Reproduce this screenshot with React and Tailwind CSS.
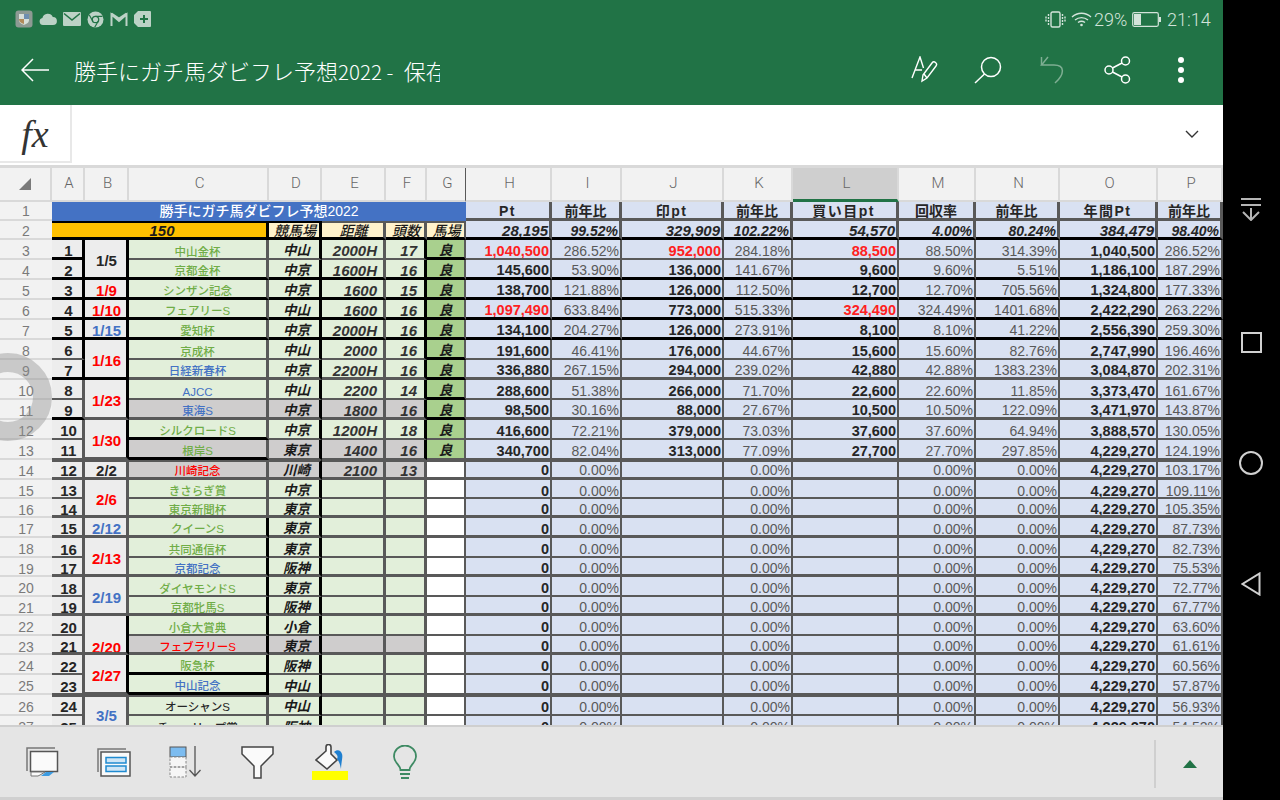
import React from 'react'

const COLS = ['A', 'B', 'C', 'D', 'E', 'F', 'G', 'H', 'I', 'J', 'K', 'L', 'M', 'N', 'O', 'P']

const LINE = {
  k: 'border-b-[3px] border-b-black',
  g: 'border-b-2 border-b-[#595959]',
  G: 'border-b-[3px] border-b-[#595959]',
}
const TINT = { k: 'text-[#262626]', r: 'text-[#ff0000]', b: 'text-[#4472c4]', g: 'text-[#70ad47]' }

// la / lc / lg / lh = bottom line of the A, C-F, G and H-P blocks
const rows = [
  { n: 3, a: '1', date: '1/5', dc: 'k', span: 2, race: '中山金杯', rc: 'g', d: '中山', e: '2000H', f: '17', good: 1, la: 'k', lc: 'g', lg: 'k', lh: 'g', vals: ['1,040,500', '286.52%', '952,000', '284.18%', '88,500', '88.50%', '314.39%', '1,040,500', '286.52%'], red: [0, 2, 4] },
  { n: 4, a: '2', race: '京都金杯', rc: 'g', d: '中京', e: '1600H', f: '16', good: 1, la: 'k', lc: 'k', lg: 'k', lh: 'k', vals: ['145,600', '53.90%', '136,000', '141.67%', '9,600', '9.60%', '5.51%', '1,186,100', '187.29%'] },
  { n: 5, a: '3', date: '1/9', dc: 'r', span: 1, race: 'シンザン記念', rc: 'g', d: '中京', e: '1600', f: '15', good: 1, la: 'k', lc: 'k', lg: 'k', lh: 'k', vals: ['138,700', '121.88%', '126,000', '112.50%', '12,700', '12.70%', '705.56%', '1,324,800', '177.33%'] },
  { n: 6, a: '4', date: '1/10', dc: 'r', span: 1, race: 'フェアリーS', rc: 'g', d: '中山', e: '1600', f: '16', good: 1, la: 'k', lc: 'k', lg: 'k', lh: 'k', vals: ['1,097,490', '633.84%', '773,000', '515.33%', '324,490', '324.49%', '1401.68%', '2,422,290', '263.22%'], red: [0, 4] },
  { n: 7, a: '5', date: '1/15', dc: 'b', span: 1, race: '愛知杯', rc: 'g', d: '中京', e: '2000H', f: '16', good: 1, la: 'k', lc: 'k', lg: 'k', lh: 'k', vals: ['134,100', '204.27%', '126,000', '273.91%', '8,100', '8.10%', '41.22%', '2,556,390', '259.30%'] },
  { n: 8, a: '6', date: '1/16', dc: 'r', span: 2, race: '京成杯', rc: 'g', d: '中山', e: '2000', f: '16', good: 1, la: 'g', lc: 'g', lg: 'k', lh: 'g', vals: ['191,600', '46.41%', '176,000', '44.67%', '15,600', '15.60%', '82.76%', '2,747,990', '196.46%'] },
  { n: 9, a: '7', race: '日経新春杯', rc: 'b', d: '中京', e: '2200H', f: '16', good: 1, la: 'k', lc: 'G', lg: 'k', lh: 'G', vals: ['336,880', '267.15%', '294,000', '239.02%', '42,880', '42.88%', '1383.23%', '3,084,870', '202.31%'] },
  { n: 10, a: '8', date: '1/23', dc: 'r', span: 2, race: 'AJCC', rc: 'b', d: '中山', e: '2200', f: '14', good: 1, la: 'g', lc: 'g', lg: 'k', lh: 'g', vals: ['288,600', '51.38%', '266,000', '71.70%', '22,600', '22.60%', '11.85%', '3,373,470', '161.67%'] },
  { n: 11, a: '9', race: '東海S', rc: 'b', d: '中京', e: '1800', f: '16', gray: 1, good: 1, la: 'k', lc: 'G', lg: 'k', lh: 'G', vals: ['98,500', '30.16%', '88,000', '27.67%', '10,500', '10.50%', '122.09%', '3,471,970', '143.87%'] },
  { n: 12, a: '10', date: '1/30', dc: 'r', span: 2, race: 'シルクロードS', rc: 'g', d: '中京', e: '1200H', f: '18', good: 1, la: 'g', lc: 'k', ld: 'g', lg: 'g', lh: 'g', vals: ['416,600', '72.21%', '379,000', '73.03%', '37,600', '37.60%', '64.94%', '3,888,570', '130.05%'] },
  { n: 13, a: '11', race: '根岸S', rc: 'g', d: '東京', e: '1400', f: '16', gray: 1, good: 1, la: 'g', lc: 'k', ld: 'g', lg: 'g', lh: 'g', vals: ['340,700', '82.04%', '313,000', '77.09%', '27,700', '27.70%', '297.85%', '4,229,270', '124.19%'] },
  { n: 14, a: '12', date: '2/2', dc: 'k', span: 1, race: '川崎記念', rc: 'r', d: '川崎', e: '2100', f: '13', gray: 1, top: 1, la: 'G', lc: 'G', lg: 'G', lh: 'G', p: '103.17%' },
  { n: 15, a: '13', date: '2/6', dc: 'r', span: 2, race: 'きさらぎ賞', rc: 'g', d: '中京', la: 'g', lc: 'g', lg: 'g', lh: 'g', p: '109.11%' },
  { n: 16, a: '14', race: '東京新聞杯', rc: 'g', d: '東京', la: 'G', lc: 'G', lg: 'G', lh: 'G', p: '105.35%' },
  { n: 17, a: '15', date: '2/12', dc: 'b', span: 1, race: 'クイーンS', rc: 'g', d: '東京', la: 'G', lc: 'G', lg: 'G', lh: 'G', p: '87.73%' },
  { n: 18, a: '16', date: '2/13', dc: 'r', span: 2, race: '共同通信杯', rc: 'g', d: '東京', la: 'g', lc: 'g', lg: 'g', lh: 'g', p: '82.73%' },
  { n: 19, a: '17', race: '京都記念', rc: 'b', d: '阪神', la: 'G', lc: 'G', lg: 'G', lh: 'G', p: '75.53%' },
  { n: 20, a: '18', date: '2/19', dc: 'b', span: 2, race: 'ダイヤモンドS', rc: 'g', d: '東京', la: 'g', lc: 'g', lg: 'g', lh: 'g', p: '72.77%' },
  { n: 21, a: '19', race: '京都牝馬S', rc: 'g', d: '阪神', la: 'G', lc: 'G', lg: 'G', lh: 'G', p: '67.77%' },
  { n: 22, a: '20', date: '2/20', dc: 'r', span: 2, low: 1, race: '小倉大賞典', rc: 'g', d: '小倉', la: 'g', lc: 'g', lg: 'g', lh: 'g', p: '63.60%' },
  { n: 23, a: '21', race: 'フェブラリーS', rc: 'r', d: '東京', gray: 1, la: 'G', lc: 'G', lg: 'G', lh: 'G', p: '61.61%' },
  { n: 24, a: '22', date: '2/27', dc: 'r', span: 2, race: '阪急杯', rc: 'g', d: '阪神', la: 'g', lc: 'k', ld: 'g', lg: 'g', lh: 'g', p: '60.56%' },
  { n: 25, a: '23', race: '中山記念', rc: 'b', d: '中山', la: 'g', lc: 'k', ld: 'g', lg: 'g', lh: 'g', p: '57.87%' },
  { n: 26, a: '24', date: '3/5', dc: 'b', span: 2, race: 'オーシャンS', rc: 'k', d: '中山', top: 1, la: 'g', lc: 'g', lg: 'g', lh: 'g', p: '56.93%' },
  { n: 27, a: '25', race: 'チューリップ賞', rc: 'k', d: '阪神', la: 'g', lc: 'g', lg: 'g', lh: 'g', p: '54.52%' },
]

const rightHead = ['Pt', '前年比', '印pt', '前年比', '買い目pt', '回収率', '前年比', '年間Pt', '前年比']
const rightSum = ['28,195', '99.52%', '329,909', '102.22%', '54,570', '4.00%', '80.24%', '384,479', '98.40%']

function Cell({ className = '', children }) {
  return <div className={`flex min-w-0 items-center overflow-hidden whitespace-nowrap leading-none ${className}`}>{children}</div>
}

function RowHead({ n, pad }) {
  return <Cell className={`justify-center border-b-2 border-b-[#d9d9d9] bg-[#f2f2f2] text-[14px] text-[#7a7a7a] ${pad}`}>{n}</Cell>
}

function SheetRow({ row }) {
  const blackAB = row.n <= 9
  const blackBC = row.n <= 13 || (row.n >= 22 && row.n <= 25)
  const blackCD = row.n >= 17 && row.n <= 25
  const fill = row.gray ? 'bg-[#cfcdcd]' : 'bg-[#e2efda]'
  const top = row.top ? 'border-t-2 border-t-[#595959]' : ''
  const vals = row.vals || ['0', '0.00%', '', '0.00%', '', '0.00%', '0.00%', '4,229,270', row.p]
  const dateLine = row.span === 2 ? (row.n >= 14 ? 'G' : row.n === 3 || row.n === 8 ? 'k' : 'G') : row.la
  const lineD = LINE[row.ld || row.lc]

  // text sits a little low in its cell
  let pad = 'pt-[4px]'
  if (row.n === 14) pad = 'pt-[2px]'
  else if (row.n === 26) pad = 'pt-[3px]'
  else if (row.n >= 15) pad = 'pt-[5px]'
  const headPad = row.n >= 15 ? 'pt-[5px]' : 'pt-[4px]'
  const racePad = row.top ? 'pt-[4px]' : 'pt-[7px]'
  let datePad = 'pt-[5px]'
  if (row.top) datePad = 'pt-[2px]'
  if (row.low) datePad = 'pt-[28px]'

  return (
    <>
      <RowHead n={row.n} pad={headPad} />
      <Cell className={`justify-center border-r-[3px] bg-[#ededed] pl-[3px] text-[15px] font-bold text-[#262626] ${pad} ${blackAB ? 'border-r-black' : 'border-r-[#595959]'} ${LINE[row.la]} ${top}`}>{row.a}</Cell>
      {row.date && (
        <Cell className={`justify-center border-r-[3px] bg-[#ededed] pl-[2px] text-[15px] font-bold ${datePad} ${row.span === 2 ? 'row-span-2' : ''} ${blackBC ? 'border-r-black' : 'border-r-[#595959]'} ${LINE[dateLine]} ${top} ${TINT[row.dc]}`}>{row.date}</Cell>
      )}
      <Cell className={`justify-center border-r-[3px] text-[11.5px] font-medium ${racePad} ${blackCD ? 'border-r-black' : 'border-r-[#595959]'} ${fill} ${LINE[row.lc]} ${top} ${TINT[row.rc]}`}>{row.race}</Cell>
      <Cell className={`justify-center border-r-[3px] border-r-black pl-[5px] text-[13.5px] font-bold text-[#1a1a1a] italic ${pad} ${fill} ${lineD} ${top}`}>{row.d}</Cell>
      <Cell className={`justify-end border-r-[3px] border-r-[#595959] pr-[6px] text-[15px] font-bold text-[#333] italic ${pad} ${fill} ${lineD} ${top}`}>{row.e}</Cell>
      <Cell className={`justify-end border-r-[3px] pr-[7px] text-[15px] font-bold text-[#333] italic ${pad} ${row.n <= 13 ? 'border-r-black' : 'border-r-[#595959]'} ${fill} ${lineD} ${top}`}>{row.f}</Cell>
      <Cell className={`justify-center border-r-[2px] border-r-[#595959] text-[13.5px] font-bold text-[#1a1a1a] italic ${pad} ${row.good ? 'bg-[#a9d08e]' : 'bg-white'} ${LINE[row.lg]} ${top}`}>{row.good ? '良' : ''}</Cell>
      {vals.map((v, i) => {
        const isPct = v.includes('%')
        const red = row.red && row.red.includes(i)
        return (
          <Cell key={i} className={`justify-end border-r-2 border-r-[#595959] bg-[#d9e1f2] pr-[1px] ${pad} ${isPct ? 'text-[14px] text-[#595959]' : 'text-[14.5px] font-bold'} ${red ? 'text-[#ff2020]' : ''} ${!isPct && !red ? 'text-[#262626]' : ''} ${LINE[row.lh]} ${top}`}>{v}</Cell>
        )
      })}
    </>
  )
}

function Sheet() {
  return (
    <div className="h-[558px] overflow-hidden bg-white font-['Liberation_Sans','Noto_Sans_CJK_JP',sans-serif]">
      <div className="grid grid-cols-[52px_33px_44px_140px_53px_64px_41px_39px_86px_70px_102px_69px_106px_77px_84px_98px_65px] grid-rows-[34px_19px_19px_repeat(11,20px)_20px_19px_19px_20px_20px_19px_20px_19px_20px_19px_20px_20px_21px_20px]">
        <Cell className="justify-center border-r-2 border-b-2 border-[#d9d9d9] bg-[#f2f2f2]">
          <svg width="14" height="14" viewBox="0 0 14 14"><path d="M13 1v12H1z" fill="#7a7a7a" /></svg>
        </Cell>
        {COLS.map((c) => (
          <Cell
            key={c}
            className={`justify-center border-b-2 pl-[3px] font-['Roboto',sans-serif] text-[15px] font-light text-[#666] ${c === 'L' ? 'border-b-[3px] border-b-[#217346] bg-[#cfcfcf]' : 'border-b-[#d9d9d9] bg-[#f2f2f2]'} ${c === 'G' ? 'border-r border-r-[#595959]' : 'border-r-2 border-r-[#d9d9d9]'}`}
          >
            {c}
          </Cell>
        ))}

        <RowHead n={1} pad="pt-[1px]" />
        <Cell className="col-span-7 justify-center bg-[#4472c4] text-[14px] font-medium text-white">勝手にガチ馬ダビフレ予想2022</Cell>
        {rightHead.map((h, i) => (
          <Cell key={i} className={`justify-center border-r-[3px] border-b-[3px] border-r-[#595959] border-b-[#595959] bg-[#d9e1f2] pt-[2px] text-[14px] font-bold text-[#262626] ${h.toLowerCase().includes('pt') ? 'tracking-[1.5px]' : ''} ${i === 4 ? 'pr-[2px]' : ''}`}>{h}</Cell>
        ))}

        <RowHead n={2} pad="pt-[3px]" />
        <Cell className="col-span-3 justify-center border-t-2 border-r-[3px] border-b-[3px] border-t-black border-r-black border-b-black bg-[#ffc000] pt-[2px] pl-[6px] text-[15px] font-bold text-[#1a1a1a] italic">150</Cell>
        <Cell className="justify-center border-t-2 border-r-[3px] border-b-[3px] border-t-black border-r-black border-b-black bg-[#fff2cc] pt-[2px] pl-[2px] text-[14px] font-medium text-[#1a1a1a] italic">競馬場</Cell>
        <Cell className="justify-center border-t-2 border-r-[3px] border-b-[3px] border-t-[#595959] border-r-[#595959] border-b-black bg-[#fff2cc] pt-[2px] pl-[2px] text-[14px] font-medium text-[#1a1a1a] italic">距離</Cell>
        <Cell className="justify-center border-t-2 border-r-[3px] border-b-[3px] border-t-[#595959] border-r-[#595959] border-b-black bg-[#fff2cc] pt-[2px] pl-[2px] text-[14px] font-medium text-[#1a1a1a] italic">頭数</Cell>
        <Cell className="justify-center border-t-2 border-r-[2px] border-b-[3px] border-t-[#595959] border-r-[#595959] border-b-black bg-[#fff2cc] pt-[2px] pl-[2px] text-[14px] font-medium text-[#1a1a1a] italic">馬場</Cell>
        {rightSum.map((v, i) => (
          <Cell key={i} className={`justify-end border-r-[3px] border-b-[3px] border-r-[#595959] border-b-black bg-[#d9e1f2] pt-[4px] pr-[1px] font-bold text-[#262626] italic ${v.includes('%') ? 'text-[14px]' : 'text-[15px]'}`}>{v}</Cell>
        ))}

        {rows.map((row) => <SheetRow key={row.n} row={row} />)}
      </div>
    </div>
  )
}

function StatusLeft() {
  return (
    <div className="flex items-center gap-[6px]">
      <svg width="18" height="18" viewBox="0 0 18 18"><rect x="0.5" y="0.5" width="17" height="17" rx="3" fill="#8d9a93" /><path d="M4 4h10v6c0 3-3 4-5 5-2-1-5-2-5-5z" fill="#d8dfd9" /><path d="M9 4h5v5H9z" fill="#6f8fb0" /><path d="M4 9h5v5c-3-1-5-2-5-5z" fill="#b08a5a" /></svg>
      <svg width="18" height="12" viewBox="0 0 18 12"><path d="M4 12a3.6 3.6 0 0 1-.6-7.1A5.5 5.5 0 0 1 13.800 4 4 4 0 0 1 14 12z" fill="#bcd2c6" /></svg>
      <svg width="18" height="14" viewBox="0 0 18 14"><rect width="18" height="14" rx="1" fill="#bcd2c6" /><path d="M1 1.500l8 6.500 8-6.500" fill="none" stroke="#217346" strokeWidth="1.600" /></svg>
      <svg width="17" height="17" viewBox="0 0 17 17"><circle cx="8.500" cy="8.500" r="8" fill="#bcd2c6" /><circle cx="8.500" cy="8.500" r="3.200" fill="none" stroke="#217346" strokeWidth="1.300" /><path d="M8.500 5.300h7M5.800 10.200L2.300 4M11.200 10.200l-3.500 6" stroke="#217346" strokeWidth="1.200" /></svg>
      <svg width="18" height="15" viewBox="0 0 18 15"><path d="M1.500 14V2.500L9 9l7.500-6.500V14M1.500 1.500L9 6.500l7.500-5" fill="none" stroke="#bcd2c6" strokeWidth="2" /></svg>
      <svg width="17" height="16" viewBox="0 0 17 16"><path d="M4 0h12a1 1 0 0 1 1 1v14a1 1 0 0 1-1 1H4L0 12V4z" fill="#bcd2c6" /><path d="M10 4v8M6 8h8" stroke="#217346" strokeWidth="2" /></svg>
    </div>
  )
}

function StatusRight() {
  return (
    <div className="flex items-center font-['Roboto',sans-serif] text-[18px] font-light text-[#d3e3da]">
      <svg width="21" height="17" viewBox="0 0 21 17" fill="none" stroke="#d3e3da" strokeWidth="1.400"><rect x="6" y="1" width="9" height="15" rx="1.500" /><path d="M3.500 3v11M1 5.500v6M17.500 3v11M20 5.500v6" strokeDasharray="2 1" /></svg>
      <svg className="ml-[5px]" width="21" height="16" viewBox="0 0 21 16" fill="none" stroke="#d3e3da" strokeWidth="1.400"><path d="M1 6a14 14 0 0 1 19 0M4 9a10 10 0 0 1 13 0M7 11.500a6 6 0 0 1 7 0" /><circle cx="10.500" cy="14" r="1.300" fill="#d3e3da" stroke="none" /></svg>
      <span className="ml-[2px] w-[34px]">29%</span>
      <svg className="ml-[4px]" width="29" height="15" viewBox="0 0 29 15"><rect x="0.700" y="0.700" width="25.600" height="13.600" rx="1.500" fill="none" stroke="#d3e3da" strokeWidth="1.200" /><rect x="2" y="2" width="7" height="11" fill="#d3e3da" /><rect x="27" y="5" width="2" height="5" fill="#d3e3da" /></svg>
      <span className="ml-[6px] w-[44px]">21:14</span>
    </div>
  )
}

function AppBar() {
  return (
    <header className="h-[105px] bg-[#217346] pr-[12px] shadow-[0_1px_3px_rgba(0,0,0,0.25)]">
      <div className="flex h-[37px] items-center justify-between pt-[1px] pl-[15px]">
        <StatusLeft />
        <StatusRight />
      </div>
      <div className="flex h-[66px] items-center pl-[21px]">
        <svg width="28" height="24" viewBox="0 0 28 24" fill="none" stroke="#fff" strokeWidth="1.500"><path d="M28 12H1M12 1L1 12l11 11" /></svg>
        <div className="ml-[25px] w-[366px] overflow-hidden font-['Noto_Sans_CJK_JP',sans-serif] text-[22px] font-light whitespace-nowrap text-white">
          勝手にガチ馬ダビフレ予想<span className="mr-[6px] text-[20.500px]">2022 - </span>保存
        </div>
        <svg className="ml-[471px]" width="27" height="28" viewBox="0 0 27 28" fill="none" stroke="#fff" strokeWidth="1.400"><path d="M1 22L9 1l3.500 11M4 14h7" /><path d="M12 19l9-12a2.200 2.200 0 0 1 4 3l-9 12-5 3z" /><path d="M13 18l3 4" /></svg>
        <svg className="ml-[36px]" width="28" height="28" viewBox="0 0 28 28" fill="none" stroke="#fff" strokeWidth="1.500"><circle cx="17" cy="11" r="9.500" /><path d="M10.500 18L1 27" /></svg>
        <svg className="ml-[38px]" width="26" height="28" viewBox="0 0 26 28" fill="none" stroke="#7fae93" strokeWidth="1.500"><path d="M8 1L1.500 9H14c11 0 11 9 1 18" /><path d="M1.500 9V1" /></svg>
        <svg className="ml-[38px]" width="27" height="28" viewBox="0 0 27 28" fill="none" stroke="#fff" strokeWidth="1.500"><circle cx="21.500" cy="5" r="4" /><circle cx="5" cy="14" r="4" /><circle cx="21.500" cy="23" r="4" /><path d="M8.500 12l9.500-5M8.500 16l9.500 5" /></svg>
        <div className="ml-[47px] flex flex-col gap-[4px]">
          <span className="size-[6px] rounded-full bg-white" />
          <span className="size-[6px] rounded-full bg-white" />
          <span className="size-[6px] rounded-full bg-white" />
        </div>
      </div>
    </header>
  )
}

function FormulaBar() {
  return (
    <div className="flex h-[60px] items-stretch bg-white">
      <div className="mb-[2px] flex w-[72px] items-center justify-center border-r-2 border-b-2 border-[#e8e8e8] pt-[3px] font-['Liberation_Serif',serif] text-[38px] leading-none text-[#333] italic">fx</div>
      <div className="flex flex-1 items-center justify-end pr-[24px]">
        <svg width="14" height="9" viewBox="0 0 14 9" fill="none" stroke="#333" strokeWidth="1.400"><path d="M1 1l6 6 6-6" /></svg>
      </div>
    </div>
  )
}

function Toolbar() {
  return (
    <footer className="flex h-[75px] items-center border-t-2 border-b-[3px] border-t-[#cfcfcf] border-b-[#d0d0d0] bg-[#e5e5e5] pl-[26px]">
      <svg width="33" height="30" viewBox="0 0 33 30" fill="none"><path d="M1 24V1h28" stroke="#777" strokeWidth="1.500" /><rect x="4.500" y="4.500" width="27" height="20" fill="#fafafa" stroke="#555" strokeWidth="1.500" /><path d="M5 25v4h7l2-1 5-3z" fill="#fafafa" stroke="#777" /><path d="M15 29l5-4h8l-5 4z" fill="#3d9be0" /></svg>
      <svg className="ml-[38px]" width="34" height="29" viewBox="0 0 34 29" fill="none"><path d="M1 24V1h28" stroke="#777" strokeWidth="1.500" /><rect x="4" y="4" width="29" height="24" fill="#fafafa" stroke="#555" strokeWidth="1.500" /><rect x="9" y="9.500" width="20" height="5.500" fill="#cfe6f6" stroke="#1f8ad0" strokeWidth="1.500" /><rect x="9" y="18" width="20" height="5.500" fill="#cfe6f6" stroke="#1f8ad0" strokeWidth="1.500" /></svg>
      <svg className="ml-[38px]" width="33" height="32" viewBox="0 0 33 32" fill="none"><rect x="1" y="1" width="16" height="10" fill="#7cbcf0" stroke="#555" /><path d="M1 11h16v10H1zM1 21h16v10H1z" fill="#f6f6f6" stroke="#888" strokeDasharray="2.500 1.500" /><path d="M26 0v30M20.500 24l5.500 6 5.500-6" stroke="#555" strokeWidth="1.300" /></svg>
      <svg className="ml-[39px]" width="33" height="33" viewBox="0 0 33 33" fill="#fafafa" stroke="#444" strokeWidth="1.500"><path d="M1 1h31v7L20 20v12h-7V20L1 8z" /></svg>
      <div className="ml-[38px] flex w-[36px] flex-col items-center">
        <svg width="30" height="27" viewBox="0 0 30 27" fill="none"><path d="M11 3a2.500 2.500 0 0 1 5 0v7l6 6-10 9L1 16l10-9z" fill="#fafafa" stroke="#444" strokeWidth="1.600" /><path d="M19 8c3-3 7-2 8 2 1 3-.5 6-1 15-1-5-2-8-4-10 1-2 1-4-3-7z" fill="#1f7fd0" /></svg>
        <div className="h-[9px] w-[36px] bg-[#ffff00]" />
      </div>
      <svg className="ml-[45px]" width="24" height="35" viewBox="0 0 24 35" fill="none" stroke="#3e8a63" strokeWidth="1.800"><path d="M7.500 25c0-5-6.500-7-6.500-13.500a11 11 0 0 1 22 0C23 18 16.500 20 16.500 25z" /><path d="M7 29h10M8 33h8" /></svg>
      <div className="mt-[3px] ml-[737px] h-[48px] w-[2px] bg-[#cfcfcf]" />
      <svg className="mt-[4px] ml-[27px]" width="14" height="8" viewBox="0 0 14 8"><path d="M7 0l7 8H0z" fill="#217346" /></svg>
    </footer>
  )
}

function NavBar() {
  return (
    <aside className="flex h-[800px] w-[57px] flex-col items-center bg-black pt-[198px] pr-[1px]">
      <svg width="20" height="23" viewBox="0 0 20 23" fill="none" stroke="#b5b5b5" strokeWidth="2"><path d="M0 1h20M0 7h20M10 10v11M2 14l8 8 8-8" /></svg>
      <div className="mt-[111px] size-[21px] border-2 border-[#d0d0d0]" />
      <div className="mt-[98px] size-[24px] rounded-full border-2 border-[#d0d0d0]" />
      <svg className="mt-[97px]" width="20" height="24" viewBox="0 0 20 24" fill="none" stroke="#d0d0d0" strokeWidth="2"><path d="M18.500 1.500v21L1.500 12z" /></svg>
    </aside>
  )
}

export default function App() {
  return (
    <div className="relative flex h-[800px] w-[1280px] overflow-hidden">
      <main className="flex h-[800px] w-[1223px] flex-col">
        <AppBar />
        <FormulaBar />
        <div className="h-[3px] bg-[#d9d9d9]" />
        <Sheet />
        <Toolbar />
      </main>
      <NavBar />
      {/* floating assistive ring, sits over the row headers */}
      <div className="absolute top-[353px] left-[-36px] size-[88px] rounded-full border-[19px] border-[#8c8c8c]/40" />
    </div>
  )
}
